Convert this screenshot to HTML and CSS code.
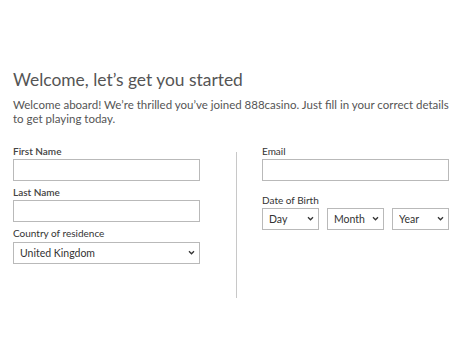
FILE: index.html
```html
<!DOCTYPE html>
<html lang="en">
<head>
  <meta charset="UTF-8">
  <title>888casino - Register</title>
  <link rel="stylesheet" href="styles.css">
</head>
<body>
  <div class="page">
    <h1>Welcome, let’s get you started</h1>
    <p class="intro">Welcome aboard! We’re thrilled you’ve joined 888casino. Just fill in your correct details to get playing today.</p>

    <form class="signup">
      <!-- left column -->
      <div class="col">
        <label for="first">First Name</label>
        <input type="text" id="first">
        <label for="last">Last Name</label>
        <input type="text" id="last">
        <label for="country" class="light">Country of residence</label>
        <div class="sel">
          <select id="country"><option>United Kingdom</option></select>
          <svg viewBox="0 0 8 6"><path d="M1 1.5 4 4.5 7 1.5" /></svg>
        </div>
      </div>

      <div class="divider"></div>

      <!-- right column -->
      <div class="col">
        <label for="email" class="light">Email</label>
        <input type="text" id="email">
        <label class="light dob">Date of Birth</label>
        <div class="dob-row">
          <div class="sel">
            <select><option>Day</option></select>
            <svg viewBox="0 0 8 6"><path d="M1 1.5 4 4.5 7 1.5" /></svg>
          </div>
          <div class="sel">
            <select><option>Month</option></select>
            <svg viewBox="0 0 8 6"><path d="M1 1.5 4 4.5 7 1.5" /></svg>
          </div>
          <div class="sel">
            <select><option>Year</option></select>
            <svg viewBox="0 0 8 6"><path d="M1 1.5 4 4.5 7 1.5" /></svg>
          </div>
        </div>
      </div>
    </form>
  </div>
</body>
</html>
```

FILE: styles.css
```css
body {
  font-family: Lato, 'Open Sans', sans-serif;
  background: #fff;
  color: #4d4d4d;
  margin: 0;
  padding: 0;
}
.page {
  padding: 68px 11px 0 13px;
}
h1 {
  font-size: 17.4px;
  font-weight: 400;
  line-height: 24px;
  color: #555;
  margin: 0;
}
.intro {
  font-size: 11.5px;
  line-height: 13.5px;
  color: #555;
  margin: 6px 0 0;
}
.signup {
  display: grid;
  grid-template-columns: 187px 1fr 187px;
  margin-top: 20px;
}
.signup .divider {
  background: #c8c8c8;
  width: 1px;
  height: 146px;
  margin: 7px 0 0 36px;
}
.col {
  display: flex;
  flex-direction: column;
}
label {
  font-size: 10px;
  line-height: 12px;
  color: #444;
  font-weight: 600;
  margin: 5px 0 2px;
}
.col label:first-child {
  margin-top: 0;
}
label.light {
  font-weight: 400;
  color: #333;
}
label.dob {
  margin-top: 13px;
  margin-bottom: 1px;
}
input[type="text"] {
  height: 22px;
  box-sizing: border-box;
  border: 1px solid #b9b9b9;
  border-radius: 0;
  padding: 0 6px;
  margin: 0;
}
.sel {
  position: relative;
}
select {
  appearance: none;
  width: 100%;
  height: 22px;
  box-sizing: border-box;
  border: 1px solid #b9b9b9;
  border-radius: 0;
  background: #fff;
  font-family: Lato, 'Open Sans', sans-serif;
  font-size: 10.5px;
  color: #333;
  padding: 0 6px;
  margin: 0;
}
.sel svg {
  position: absolute;
  right: 5px;
  top: 9px;
  width: 7px;
  height: 5px;
  fill: none;
  stroke: #333;
  stroke-width: 1.6;
  pointer-events: none;
}
.dob-row {
  display: grid;
  grid-template-columns: repeat(3, 1fr);
  gap: 8px;
}
```
